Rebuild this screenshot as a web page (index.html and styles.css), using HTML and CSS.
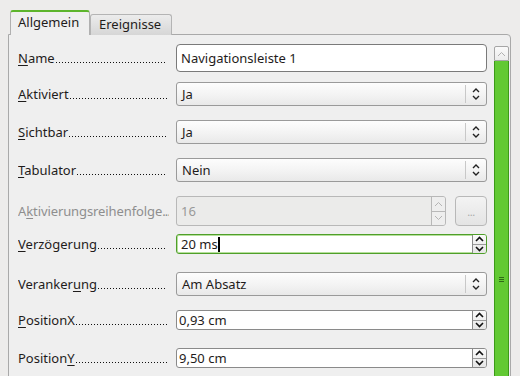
FILE: index.html
```html
<!DOCTYPE html>
<html lang="de">
<head>
    <meta charset="UTF-8">
    <title>Eigenschaften: Navigationsleiste</title>
    <link rel="stylesheet" href="styles.css">
</head>
<body>
    <div class="dialog">
        <div class="tabs">
            <div class="tab active">Allgemein</div>
            <div class="tab">Ereignisse</div>
        </div>

        <div class="pane">
            <div class="form">
                <div class="row r-name">
                    <label class="lbl"><span><u>N</u>ame</span><span class="dots"></span></label>
                    <div class="field text tall">Navigationsleiste 1</div>
                </div>

                <div class="row r-gap10">
                    <label class="lbl"><span><u>A</u>ktiviert</span><span class="dots"></span></label>
                    <div class="field list"><span class="val">Ja</span><span class="sep"></span>
                        <svg class="updown" width="8" height="14" viewBox="0 0 8 14"><polyline points="1,5 4,2 7,5"/><polyline points="1,9 4,12 7,9"/></svg>
                    </div>
                </div>

                <div class="row r-gap14">
                    <label class="lbl"><span><u>S</u>ichtbar</span><span class="dots"></span></label>
                    <div class="field list"><span class="val">Ja</span><span class="sep"></span>
                        <svg class="updown" width="8" height="14" viewBox="0 0 8 14"><polyline points="1,5 4,2 7,5"/><polyline points="1,9 4,12 7,9"/></svg>
                    </div>
                </div>

                <div class="row r-gap14">
                    <label class="lbl"><span><u>T</u>abulator</span><span class="dots"></span></label>
                    <div class="field list"><span class="val">Nein</span><span class="sep"></span>
                        <svg class="updown" width="8" height="14" viewBox="0 0 8 14"><polyline points="1,5 4,2 7,5"/><polyline points="1,9 4,12 7,9"/></svg>
                    </div>
                </div>

                <div class="row r-gap14 r-order">
                    <label class="lbl disabled"><span>A<u>k</u>tivierungsreihenfolge<span class="ell">...</span></span></label>
                    <div class="field-wrap">
                        <div class="field spin disabled-field"><span class="val">16</span>
                            <span class="spinbox">
                                <span class="arrow"><svg width="9" height="6" viewBox="0 0 9 6"><polyline points="1,5 4.5,1.5 8,5"/></svg></span>
                                <span class="arrow"><svg width="9" height="6" viewBox="0 0 9 6"><polyline points="1,1 4.5,4.5 8,1"/></svg></span>
                            </span>
                        </div>
                        <button class="more">...</button>
                    </div>
                </div>

                <div class="row r-gap8">
                    <label class="lbl"><span><u>V</u>erzögerung</span><span class="dots"></span></label>
                    <div class="field spin focus"><span class="val">20 ms<span class="caret"></span></span>
                        <span class="spinbox">
                            <span class="arrow"><svg width="9" height="6" viewBox="0 0 9 6"><polyline points="1,5 4.5,1.5 8,5"/></svg></span>
                            <span class="arrow"><svg width="9" height="6" viewBox="0 0 9 6"><polyline points="1,1 4.5,4.5 8,1"/></svg></span>
                        </span>
                    </div>
                </div>

                <div class="row r-gap18">
                    <label class="lbl"><span>Veranker<u>u</u>ng</span><span class="dots"></span></label>
                    <div class="field list"><span class="val">Am Absatz</span><span class="sep"></span>
                        <svg class="updown" width="8" height="14" viewBox="0 0 8 14"><polyline points="1,5 4,2 7,5"/><polyline points="1,9 4,12 7,9"/></svg>
                    </div>
                </div>

                <div class="row r-gap14">
                    <label class="lbl"><span><u>P</u>ositionX</span><span class="dots"></span></label>
                    <div class="field spin"><span class="val pos">0,93 cm</span>
                        <span class="spinbox">
                            <span class="arrow"><svg width="9" height="6" viewBox="0 0 9 6"><polyline points="1,5 4.5,1.5 8,5"/></svg></span>
                            <span class="arrow"><svg width="9" height="6" viewBox="0 0 9 6"><polyline points="1,1 4.5,4.5 8,1"/></svg></span>
                        </span>
                    </div>
                </div>

                <div class="row r-gap18">
                    <label class="lbl"><span>Position<u>Y</u></span><span class="dots"></span></label>
                    <div class="field spin"><span class="val pos">9,50 cm</span>
                        <span class="spinbox">
                            <span class="arrow"><svg width="9" height="6" viewBox="0 0 9 6"><polyline points="1,5 4.5,1.5 8,5"/></svg></span>
                            <span class="arrow"><svg width="9" height="6" viewBox="0 0 9 6"><polyline points="1,1 4.5,4.5 8,1"/></svg></span>
                        </span>
                    </div>
                </div>
            </div>

            <div class="scrollbar">
                <div class="sb-up">
                    <svg width="9" height="6" viewBox="0 0 9 6"><polyline points="1,5 4.5,1.5 8,5"/></svg>
                </div>
                <div class="sb-thumb"><span class="grip"></span></div>
            </div>
        </div>
    </div>
</body>
</html>
```

FILE: styles.css
```css
* {
    margin: 0;
    padding: 0;
    box-sizing: border-box;
}

body {
    background: #edeceb;
    font-family: 'Noto Sans', sans-serif;
    font-size: 13px;
    color: #1f1c1b;
    overflow: hidden;
    height: 376px;
}

.dialog {
    padding: 10px 9px 0 8px;
}

/* tabs */
.tabs {
    display: flex;
    align-items: flex-end;
    margin-left: 2px;
    margin-bottom: -1px;
    position: relative;
    z-index: 1;
}

.tab {
    height: 21px;
    padding: 0 10px 0 8px;
    line-height: 19px;
    border: 1px solid #b4b4b4;
    border-bottom: none;
    border-radius: 3px 3px 0 0;
    background: linear-gradient(#ececec, #d6d6d6);
}

.tab.active {
    height: 25px;
    width: 80px;
    padding: 0 0 0 7px;
    line-height: 20px;
    border-color: #b0b0b0;
    border-top: 2px solid #5db52c;
    background: #efefef;
}

/* pane */
.pane {
    display: flex;
    height: 400px;
    background: #efefef;
    border: 1px solid #a9a9a9;
    border-radius: 0 4px 0 0;
    padding: 9px 1px 0 9px;
}

.form {
    width: 469px;
    margin-right: 7px;
    display: flex;
    flex-direction: column;
}

.row {
    display: flex;
    align-items: center;
    gap: 7px;
}

.r-gap8 { margin-top: 8px; }
.r-gap10 { margin-top: 10px; }
.r-gap14 { margin-top: 14px; }
.r-gap18 { margin-top: 18px; }

.lbl {
    width: 151px;
    height: 18px;
    line-height: 18px;
    display: flex;
    white-space: nowrap;
    overflow: hidden;
    flex-shrink: 0;
}

/* dotted leader after each label */
.lbl .dots {
    flex: 1;
    margin: 0 2px 0 1px;
    background-image: linear-gradient(to right, #111 1px, rgba(17, 17, 17, 0.35) 1px, rgba(17, 17, 17, 0.35) 1.5px, transparent 1.5px);
    background-size: 3px 1px;
    background-repeat: repeat-x;
    background-position: 0 calc(100% - 4px);
}

.lbl.disabled {
    color: #8e8e8e;
    letter-spacing: -0.1px;
}

.lbl .ell {
    letter-spacing: -0.8px;
}

u {
    text-underline-offset: 2px;
}

/* fields */
.field {
    flex: 1;
    height: 24px;
    display: flex;
    align-items: center;
    border: 1px solid #8f8f8f;
    border-radius: 3px;
    background: #fff;
}

.field .val {
    flex: 1;
    padding-left: 5px;
    white-space: nowrap;
}

.field .val.pos {
    padding-left: 2px;
}

.text.tall {
    height: 28px;
    border-radius: 4px;
    border-color: #7a7a7a;
    padding-left: 4px;
}

.list {
    background: linear-gradient(#fdfdfd, #f3f3f3 55%, #e9e9e9);
    border-color: #9a9a9a;
}

.list .sep {
    width: 1px;
    height: 18px;
    background: #c8c8c8;
    margin-right: 6px;
}

.updown {
    margin-right: 6px;
    fill: none;
    stroke: #222;
    stroke-width: 1.4;
}

.spin {
    height: 20px;
    border-color: #8a8a8a;
    border-radius: 3px;
}

.spin .val {
    padding-left: 4px;
    display: flex;
    align-items: center;
}

.spin.focus {
    border: 1px solid #4f9f2a;
    box-shadow: inset 0 0 0 1px #b6e09c;
}

.caret {
    display: inline-block;
    width: 2px;
    height: 15px;
    background: #000;
}

.spinbox {
    width: 14px;
    align-self: stretch;
    display: flex;
    flex-direction: column;
    border-left: 1px solid #8a8a8a;
    background: linear-gradient(#fafafa, #e6e6e6);
    border-radius: 0 2px 2px 0;
}

.spinbox .arrow {
    flex: 1;
    display: flex;
    align-items: center;
    justify-content: center;
}

.spinbox .arrow + .arrow {
    border-top: 1px solid #9a9a9a;
}

.spinbox svg {
    fill: none;
    stroke: #111;
    stroke-width: 1.6;
}

/* disabled order field */
.field-wrap {
    flex: 1;
    display: flex;
    gap: 9px;
}

.disabled-field {
    height: 30px;
    background: #ebebea;
    border-color: #b8b8b8;
    color: #999;
}

.disabled-field .spinbox {
    border-left-color: #b8b8b8;
    background: #eeeeee;
}

.disabled-field .spinbox .arrow + .arrow {
    border-top-color: #b8b8b8;
}

.disabled-field .spinbox svg {
    stroke: #b4b4b4;
    stroke-width: 1;
}

.more {
    width: 32px;
    height: 30px;
    border: 1px solid #b8b8b8;
    border-radius: 4px;
    background: linear-gradient(#f3f3f3, #e4e4e4);
    color: #aaa;
    font-family: 'Noto Sans', sans-serif;
    font-size: 11px;
    letter-spacing: -0.5px;
}

/* scrollbar */
.scrollbar {
    width: 15px;
    margin-top: 2px;
    display: flex;
    flex-direction: column;
}

.sb-up {
    height: 15px;
    border: 1px solid #a6a6a6;
    border-radius: 2px 2px 0 0;
    background: linear-gradient(#fafafa, #ececec);
    display: flex;
    align-items: center;
    justify-content: center;
}

.sb-up svg {
    fill: none;
    stroke: #b0b0b0;
    stroke-width: 1;
}

.sb-thumb {
    flex: 1;
    background: #62c933;
    border: 1px solid #3c9a19;
    border-top: none;
    position: relative;
}

.grip {
    position: absolute;
    left: 4px;
    top: 216px;
    width: 5px;
    height: 5px;
    border-top: 1px solid #2f6a18;
    border-bottom: 1px solid #2f6a18;
}

.grip::after {
    content: "";
    position: absolute;
    left: 0;
    right: 0;
    top: 1px;
    border-top: 1px solid #2f6a18;
}
```
